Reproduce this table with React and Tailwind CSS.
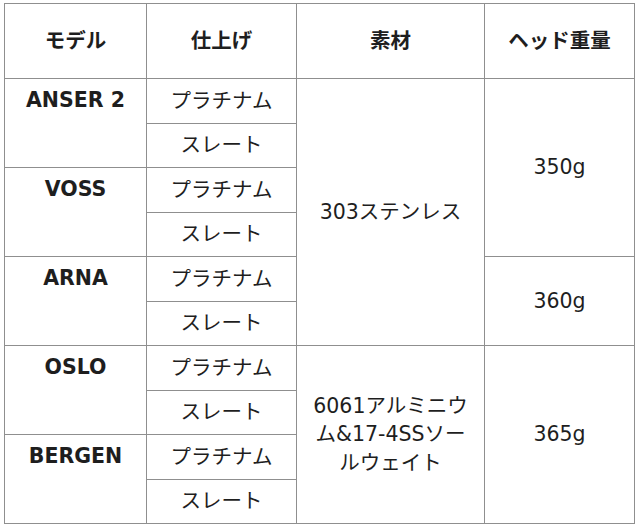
import React from 'react';

const font = { fontFamily: '"DejaVu Sans", "Noto Sans CJK JP", sans-serif' };

const cell = 'border border-[#8f8f8f] text-center align-middle p-0';

export default function App() {
  return (
    <div className="w-[640px] h-[527px] bg-white pt-[3px] pl-[4px]" style={font}>
      <table className="table-fixed border-collapse text-[20.5px] text-[#1e1e1e] leading-[28.5px]">
        <colgroup>
          <col className="w-[142px]" />
          <col className="w-[150px]" />
          <col className="w-[188px]" />
          <col className="w-[150px]" />
        </colgroup>
        <thead>
          <tr className="h-[75px]">
            <th className={`${cell} font-bold`}>モデル</th>
            <th className={`${cell} font-bold`}>仕上げ</th>
            <th className={`${cell} font-bold`}>素材</th>
            <th className={`${cell} font-bold`}>ヘッド重量</th>
          </tr>
        </thead>
        <tbody>
          <tr className="h-[44.5px]">
            <td rowSpan={2} className={`${cell} font-bold align-top pt-[7px]`}>ANSER 2</td>
            <td className={cell}>プラチナム</td>
            <td rowSpan={6} className={cell}>303ステンレス</td>
            <td rowSpan={4} className={cell}>350g</td>
          </tr>
          <tr className="h-[44.5px]">
            <td className={cell}>スレート</td>
          </tr>
          <tr className="h-[44.5px]">
            <td rowSpan={2} className={`${cell} font-bold align-top pt-[7px]`}>VOSS</td>
            <td className={cell}>プラチナム</td>
          </tr>
          <tr className="h-[44.5px]">
            <td className={cell}>スレート</td>
          </tr>
          <tr className="h-[44.5px]">
            <td rowSpan={2} className={`${cell} font-bold align-top pt-[7px]`}>ARNA</td>
            <td className={cell}>プラチナム</td>
            <td rowSpan={2} className={cell}>360g</td>
          </tr>
          <tr className="h-[44.5px]">
            <td className={cell}>スレート</td>
          </tr>
          <tr className="h-[44.5px]">
            <td rowSpan={2} className={`${cell} font-bold align-top pt-[7px]`}>OSLO</td>
            <td className={cell}>プラチナム</td>
            <td rowSpan={4} className={cell}>
              6061アルミニウ<br />ム&amp;17-4SSソー<br />ルウェイト
            </td>
            <td rowSpan={4} className={cell}>365g</td>
          </tr>
          <tr className="h-[44.5px]">
            <td className={cell}>スレート</td>
          </tr>
          <tr className="h-[44.5px]">
            <td rowSpan={2} className={`${cell} font-bold align-top pt-[7px]`}>BERGEN</td>
            <td className={cell}>プラチナム</td>
          </tr>
          <tr className="h-[44.5px]">
            <td className={cell}>スレート</td>
          </tr>
        </tbody>
      </table>
    </div>
  );
}
